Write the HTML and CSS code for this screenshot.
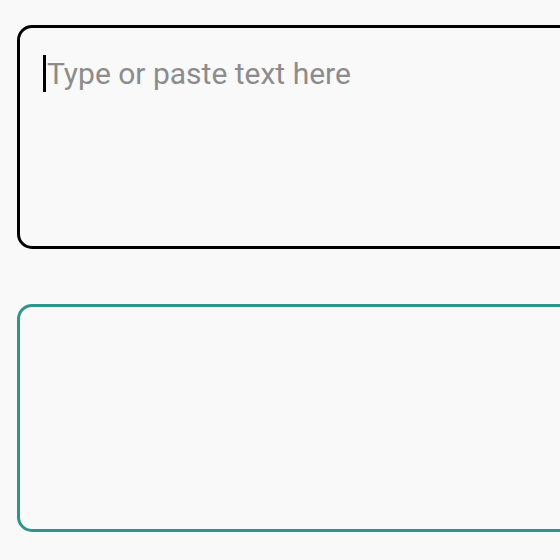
FILE: index.html
```html
<!DOCTYPE html>
<html>
<head>
<meta charset="utf-8">
<link rel="stylesheet" href="styles.css">
</head>
<body>
<main class="page">
  <div class="field field-input">
    <span class="caret"></span><span class="placeholder">Type or paste text here</span>
  </div>
  <div class="field field-output"></div>
</main>
</body>
</html>
```
FILE: styles.css
```css
html, body {
  margin: 0;
  padding: 0;
  background: #f9f9f9;
  overflow: hidden;
  width: 560px;
  height: 560px;
}
.page {
  display: flex;
  flex-direction: column;
  gap: 55px;
  padding: 25px 0 0 17px;
  font-family: Roboto, "Noto Sans", sans-serif;
  width: 543px;
  overflow: hidden;
}
.field {
  box-sizing: border-box;
  width: 600px;
  flex: none;
  border-radius: 15px;
  background: #f9f9f9;
}
.field-input {
  height: 224px;
  border: 3px solid #000;
  padding: 27px 0 0 23px;
  display: flex;
  align-items: flex-start;
}
.caret {
  display: inline-block;
  width: 3px;
  height: 37px;
  background: #000;
  flex: none;
}
.placeholder {
  font-size: 30px;
  line-height: 38px;
  color: #8c8c8c;
  margin-left: 1px;
}
.field-output {
  height: 228px;
  border: 3px solid #2f9489;
}
```
